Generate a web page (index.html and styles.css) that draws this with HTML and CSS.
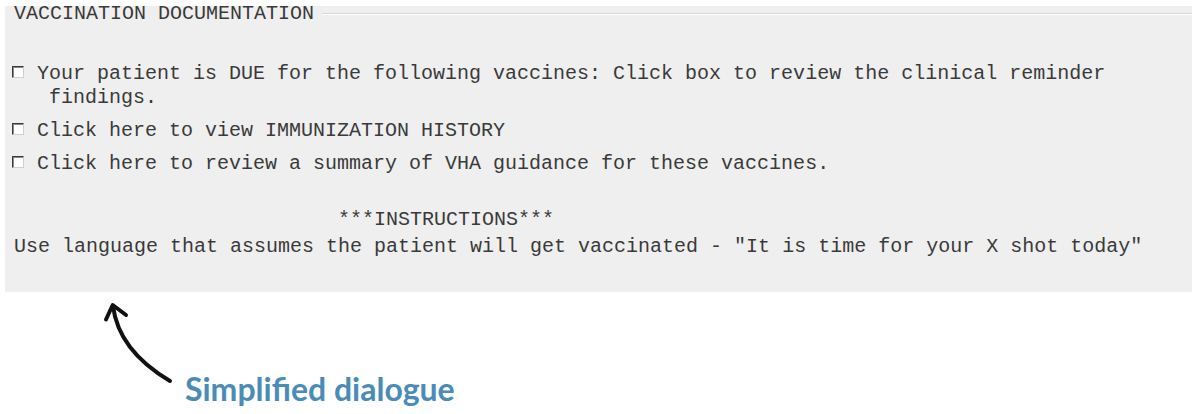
FILE: index.html
```html
<!DOCTYPE html>
<html>
<head>
<meta charset="utf-8">
<link rel="stylesheet" href="styles.css">
</head>
<body>
<div class="panel">
  <div class="legend-row">
    <span class="legend">VACCINATION DOCUMENTATION</span>
    <span class="rule"></span>
  </div>
  <div class="items">
    <div class="item">
      <span class="cb"></span>
      <span class="label">Your patient is DUE for the following vaccines: Click box to review the clinical reminder<span class="cont">findings.</span></span>
    </div>
    <div class="item">
      <span class="cb"></span>
      <span class="label">Click here to view IMMUNIZATION HISTORY</span>
    </div>
    <div class="item">
      <span class="cb"></span>
      <span class="label">Click here to review a summary of VHA guidance for these vaccines.</span>
    </div>
  </div>
  <pre class="instr">                           ***INSTRUCTIONS***
Use language that assumes the patient will get vaccinated - "It is time for your X shot today"</pre>
</div>
<div class="note">
  <svg class="arrow" width="80" height="90" viewBox="0 0 80 90">
    <path d="M70 81 Q18.5 50.5 13 6" fill="none" stroke="#111" stroke-width="4" stroke-linecap="round"/>
    <path d="M6 19.5 L12.7 5 L26 15" fill="none" stroke="#111" stroke-width="4" stroke-linecap="round" stroke-linejoin="round"/>
  </svg>
  <span class="note-text">Simplified dialogue</span>
</div>
</body>
</html>
```

FILE: styles.css
```css
html, body {
  margin: 0;
  padding: 0;
  background: #ffffff;
}

.panel {
  margin: 6px 0 0 5px;
  width: 1187px;
  height: 286px;
  background: #efefef;
  font-family: "Liberation Mono", "Courier New", monospace;
  font-size: 20px;
  color: #3a3a3a;
}

.legend-row {
  display: flex;
  align-items: center;
  height: 16px;
  padding-left: 9px;
}

.legend {
  line-height: 16px;
  padding-right: 8px;
  white-space: pre;
}

.rule {
  flex: 1;
  height: 1px;
  background: #d8d8d8;
  border-bottom: 1px solid #ffffff;
}

.items {
  display: flex;
  flex-direction: column;
  gap: 9px;
  margin-top: 40px;
  padding-left: 7px;
}

.item {
  display: flex;
  align-items: flex-start;
  line-height: 24px;
}

.cb {
  flex: none;
  width: 10px;
  height: 10px;
  margin-top: 4px;
  margin-right: 13px;
  background: #ffffff;
  border-top: 1px solid #3a3a3a;
  border-left: 1px solid #3a3a3a;
  border-right: 1px solid #d0d0d0;
  border-bottom: 1px solid #d0d0d0;
  box-shadow: inset 1px 1px 0 #8a8a8a;
}

.label {
  white-space: nowrap;
}

.cont {
  display: block;
  padding-left: 12px;
}

.instr {
  margin: 30px 0 0 9px;
  font-family: inherit;
  font-size: 20px;
  line-height: 27px;
}

.note {
  display: flex;
  align-items: flex-start;
  margin-top: 8px;
  padding-left: 100px;
}

.arrow {
  flex: none;
  display: block;
}

.note-text {
  margin: 70px 0 0 5px;
  font-family: Lato, "Open Sans", sans-serif;
  font-weight: bold;
  font-size: 32px;
  line-height: 38px;
  color: #4a8cb7;
}
```
